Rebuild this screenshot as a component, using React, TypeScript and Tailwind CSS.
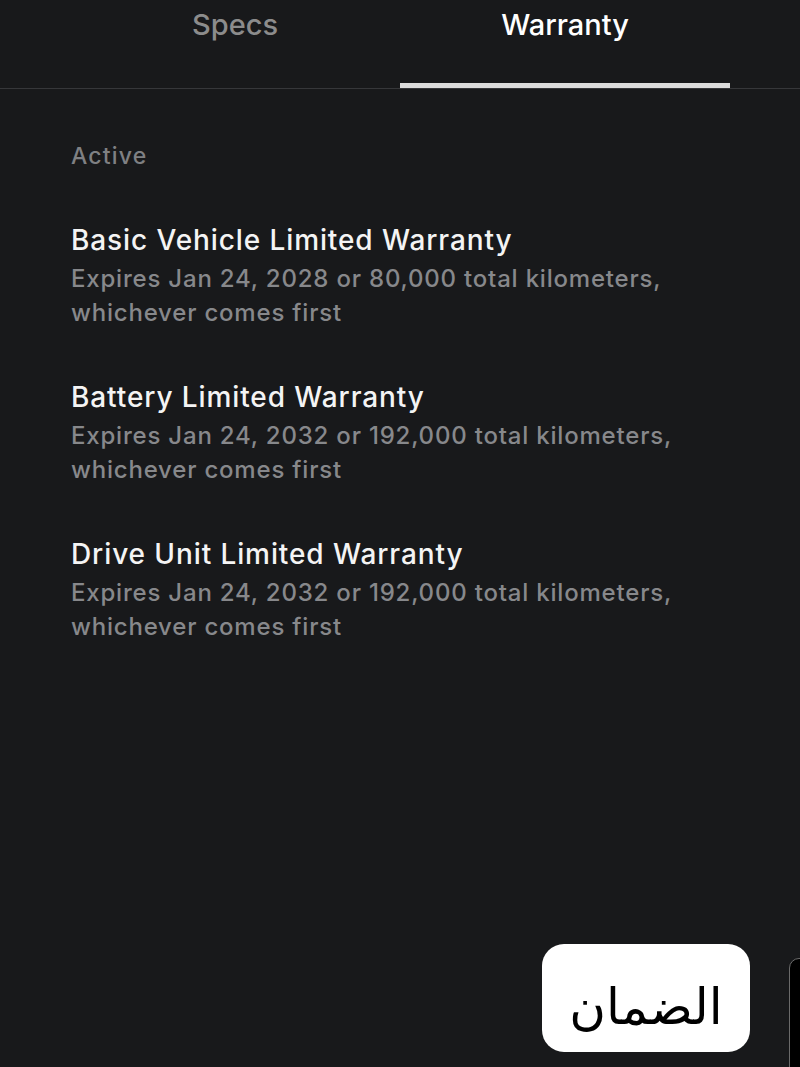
export default function App() {
  const items = [
    {
      title: "Basic Vehicle Limited Warranty",
      desc: "Expires Jan 24, 2028 or 80,000 total kilometers, whichever comes first",
    },
    {
      title: "Battery Limited Warranty",
      desc: "Expires Jan 24, 2032 or 192,000 total kilometers, whichever comes first",
    },
    {
      title: "Drive Unit Limited Warranty",
      desc: "Expires Jan 24, 2032 or 192,000 total kilometers, whichever comes first",
    },
  ];

  return (
    <div
      className="relative w-[800px] h-[1067px] overflow-hidden bg-[#18191b] text-white"
      style={{ fontFamily: "Inter, 'Noto Sans', sans-serif" }}
    >
      {/* tabs */}
      <div className="border-b border-[#36373a]">
        <div className="flex mx-[70px]">
          <div className="w-[330px] h-[88px] flex justify-center pt-[3px] text-[29px] font-medium text-[#8c8c8c]">
            Specs
          </div>
          <div className="w-[330px] h-[88px] flex flex-col items-center justify-between pt-[3px] text-[29px] font-medium text-white">
            <span>Warranty</span>
            <div className="w-full h-[5px] bg-[#dcdcdc]" />
          </div>
        </div>
      </div>

      <div className="px-[71px] pt-[52px]">
        <div className="text-[23px] text-[#7f8083] font-medium leading-[30px] tracking-[1.2px]">Active</div>

        <div className="flex flex-col gap-[49px] mt-[51px]">
          {items.map((it) => (
            <div key={it.title}>
              <div className="text-[28px] font-medium leading-[36px] tracking-[0.9px] text-[#f4f4f4]">{it.title}</div>
              <div className="mt-[4px] text-[24px] font-medium leading-[34px] tracking-[0.8px] text-[#87888b] w-[640px]">
                {it.desc}
              </div>
            </div>
          ))}
        </div>
      </div>

      {/* caption overlay */}
      <div className="absolute left-[542px] top-[944px] w-[208px] h-[108px] bg-white rounded-[22px] flex items-center justify-center">
        <span
          className="text-black text-[50px] leading-none pt-[18px]"
          style={{ fontFamily: "'DejaVu Sans', 'Noto Sans', sans-serif" }}
          dir="rtl"
        >
          الضمان
        </span>
      </div>
      <div className="absolute left-[789px] top-[958px] w-[40px] h-[140px] bg-black border border-[#6a6a6a] rounded-[10px]" />
    </div>
  );
}
